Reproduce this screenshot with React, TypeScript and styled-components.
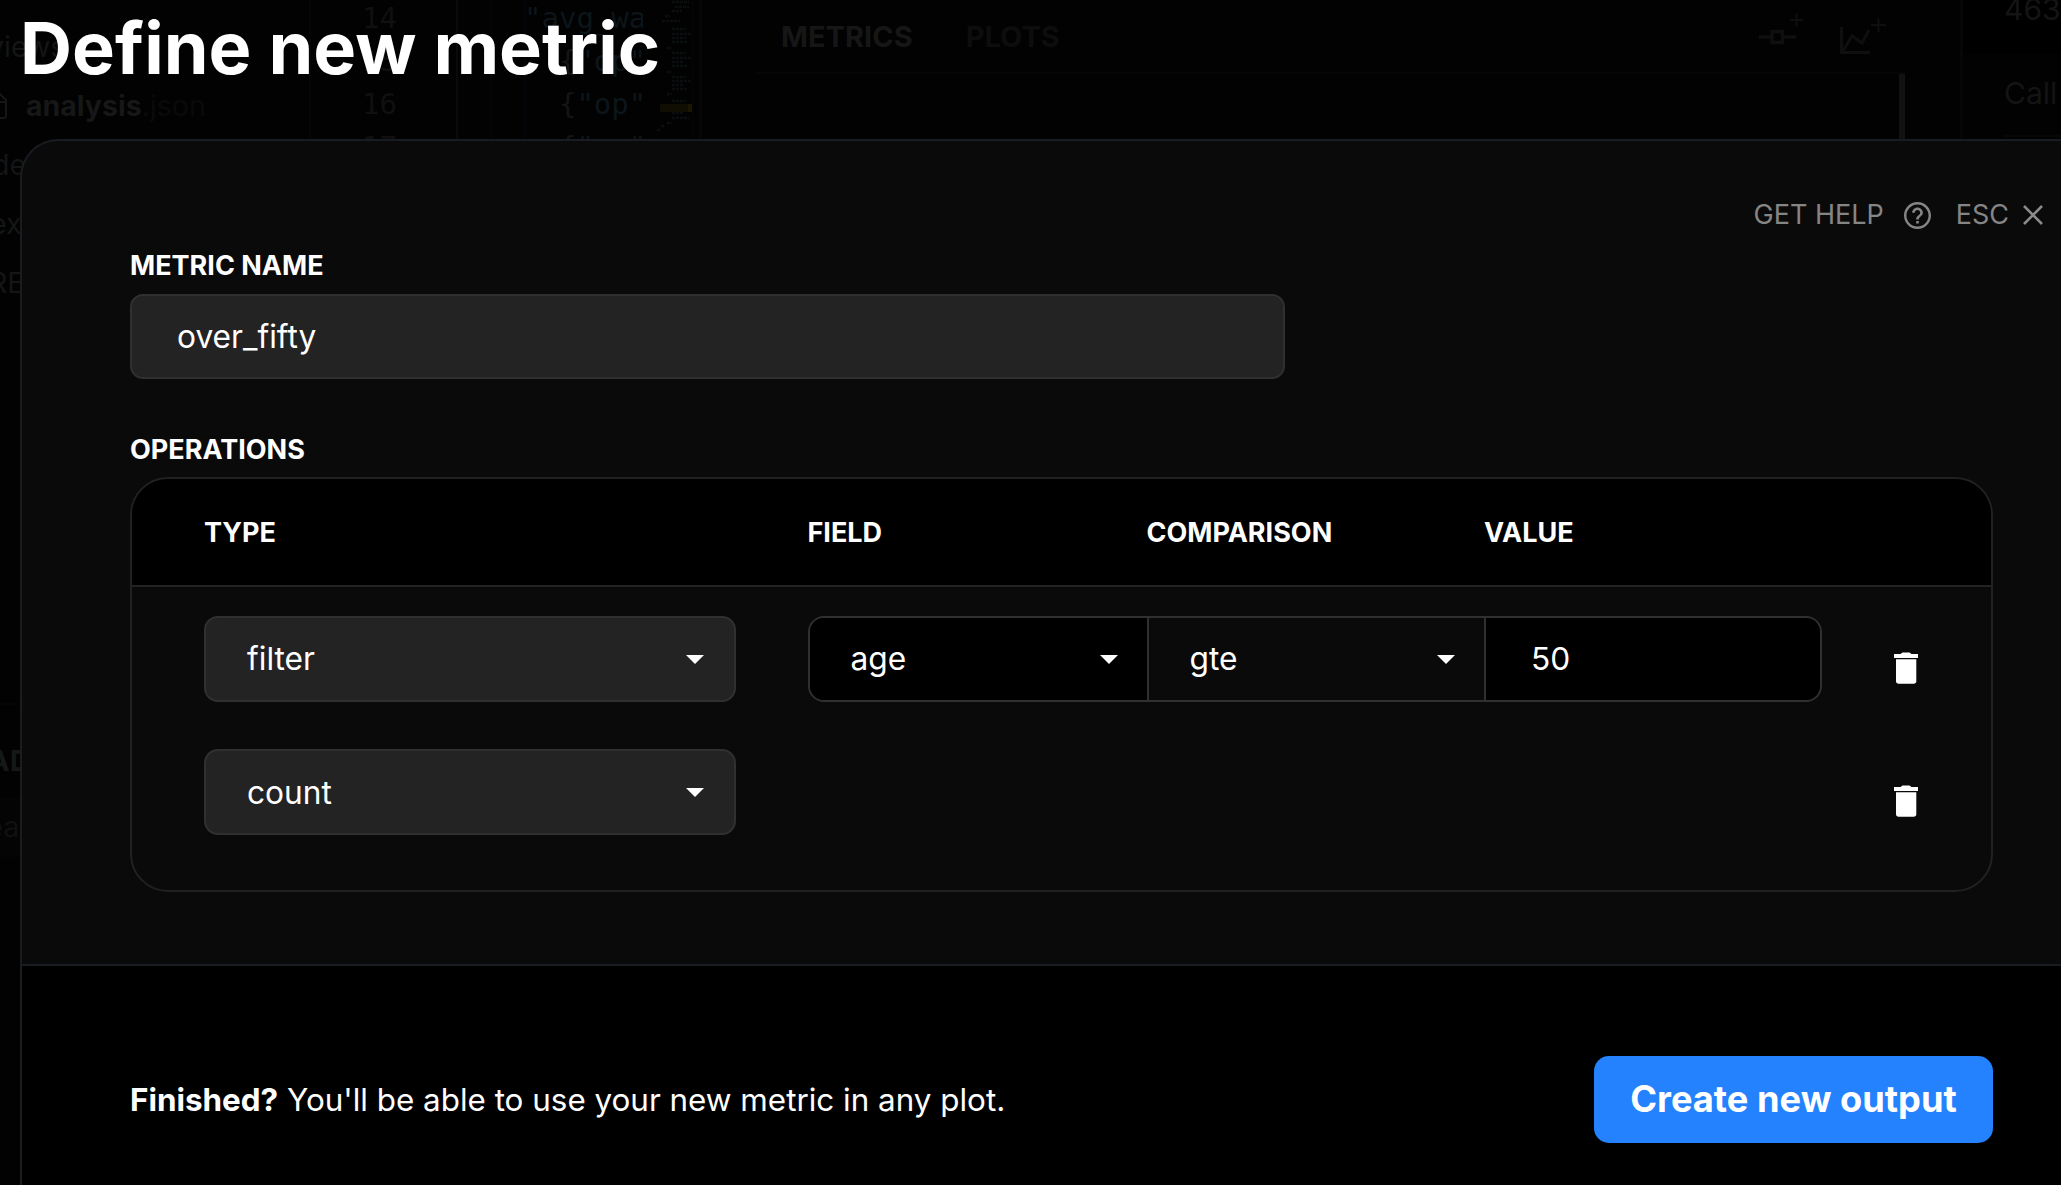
import React from "react";
import styled, { createGlobalStyle } from "styled-components";

const GlobalStyle = createGlobalStyle`
  * { box-sizing: border-box; }
  body {
    margin: 0;
    background: #000;
    color: #fff;
    font-family: Inter, "Liberation Sans", sans-serif;
    overflow: hidden;
  }
`;

const Screen = styled.div`
  position: relative;
  width: 2061px;
  height: 1185px;
  overflow: hidden;
`;

/* ---------- dimmed workspace behind the dialog ---------- */

const Workspace = styled.div`
  display: flex;
  height: 100%;
  background: #020202;
`;

const Sidebar = styled.div`
  width: 311px;
  flex: none;
  border-right: 2px solid #060606;
  padding-top: 17px;
`;

const FileRow = styled.div<{ $shift?: number }>`
  display: flex;
  align-items: center;
  height: 59px;
  margin-left: ${(p) => -(p.$shift ?? 0)}px;
  font-size: 28.5px;
  line-height: 59px;
  color: #141515;
  white-space: nowrap;

  svg { margin-right: 18px; }
  b { font-weight: 700; color: #161717; }
  span { color: #0a0a0a; }
`;

const SectionTitle = styled.div`
  margin-top: 391px;
  border-top: 2px solid #050505;
  height: 95px;
  padding-top: 37px;
  font-size: 29px;
  line-height: 38px;
  font-weight: 700;
  text-indent: -12px;
  color: #161717;
`;

const SearchRow = styled.div`
  height: 59px;
  line-height: 57px;
  font-size: 29px;
  text-indent: -14px;
  background: #040404;
  color: #101010;
`;

const Mono = styled.div`
  font-family: "DejaVu Sans Mono", "Liberation Mono", monospace;
  font-size: 29px;
  line-height: 43px;
  white-space: pre;
  overflow: hidden;
`;

const Gutter = styled(Mono)`
  width: 147px;
  flex: none;
  border-right: 2px solid #0a0a0a;
  padding-left: 51px;
  margin-top: -3px;
  color: #101010;
`;

const Code = styled(Mono)`
  width: 185px;
  flex: none;
  margin-top: -3px;
  color: #0c151a;
  display: flex;

  i { font-style: normal; color: #141414; }
`;

const IndentGuide = styled.div<{ $w: number }>`
  width: ${(p) => p.$w}px;
  flex: none;
  border-right: 2px solid #04040a;
`;

const CodeText = styled.div`
  margin-left: -2px;
`;

const MiniMap = styled.svg`
  flex: none;
`;

const Results = styled.div`
  flex: 1;
  padding-left: 54px;
  border-left: 3px solid #060606;
`;

const TabBar = styled.div`
  display: flex;
  align-items: center;
  width: 1149px;
  height: 74px;
  padding: 0 19px 0 25px;
  border-bottom: 2px solid #060606;
`;

const Tab = styled.div<{ $active?: boolean }>`
  margin-right: 53px;
  font-size: 29px;
  font-weight: 700;
  color: ${(p) => (p.$active ? "#161616" : "#0d0d0d")};
`;

const TabIcons = styled.div`
  display: flex;
  gap: 37px;
  align-items: flex-start;
  margin-left: auto;

  svg:first-child { margin-top: -5px; }
`;

const ScrollArea = styled.div`
  width: 1149px;
  height: 300px;
  border-right: 6px solid #121212;
`;

const Aside = styled.div`
  width: 101px;
  flex: none;
  border-left: 3px solid #060606;
  font-size: 30px;
  color: #141414;
`;

const AsideCount = styled.div`
  height: 54px;
  padding-left: 41px;
  line-height: 18px;
  background: #000;
`;

const AsideItem = styled.div`
  height: 83px;
  margin-left: 41px;
  line-height: 78px;
  border-bottom: 2px solid #070707;
`;

/* ---------- dialog ---------- */

const Overlay = styled.div`
  position: absolute;
  inset: 0;
  display: flex;
  flex-direction: column;
  padding-left: 20px;
`;

const Title = styled.h1`
  flex: none;
  height: 139px;
  margin: 0;
  padding-top: 4px;
  font-size: 72px;
  line-height: 88px;
  font-weight: 700;
`;

const Dialog = styled.section`
  flex: 1;
  display: flex;
  flex-direction: column;
  background: #0a0a0a;
  border: 2px solid #191c21;
  border-width: 2px 0 0 2px;
  border-top-left-radius: 38px;
  overflow: hidden;
`;

const Toolbar = styled.div`
  display: flex;
  justify-content: flex-end;
  align-items: center;
  height: 34px;
  margin-top: 57px;
  padding-right: 18px;
  font-size: 27px;
  line-height: 34px;
  color: #858585;

  svg { flex: none; }
`;

const HelpText = styled.span`
  margin-right: 20px;
`;

const EscText = styled.span`
  margin: 0 14px 0 25px;
`;

const Form = styled.div`
  padding: 17px 68px 72px 108px;
`;

const Label = styled.div`
  margin-bottom: 11px;
  font-size: 27px;
  line-height: 34px;
  font-weight: 700;
`;

const NameInput = styled.div`
  display: flex;
  align-items: center;
  width: 1155px;
  height: 85px;
  margin-bottom: 54px;
  padding-left: 45px;
  border: 2px solid #303030;
  border-radius: 13px;
  background: #232323;
  font-size: 31.7px;
`;

const Table = styled.div`
  width: 1863px;
  height: 415px;
  margin-top: -1px;
  border: 2px solid #212121;
  border-radius: 38px;
  overflow: hidden;
`;

const HeaderRow = styled.div`
  display: grid;
  grid-template-columns: 603.5px 339px 337.5px auto;
  align-items: center;
  height: 108px;
  padding: 1px 0 0 72px;
  border-bottom: 2px solid #232323;
  background: #000;
  font-size: 27px;
  font-weight: 700;
`;

const Rows = styled.div`
  display: flex;
  flex-direction: column;
  gap: 47px;
  padding: 29px 0 0 72px;
`;

const Row = styled.div`
  display: grid;
  grid-template-columns: 532px 1014px 24px;
  column-gap: 72px;
  height: 86px;
`;

const OptionText = styled.span<{ $raised?: boolean }>`
  padding-bottom: ${(p) => (p.$raised ? 2 : 0)}px;
`;

const Select = styled.div`
  display: flex;
  align-items: center;
  justify-content: space-between;
  padding: 0 30px 0 41px;
  border: 2px solid #303030;
  border-radius: 14px;
  background: #232323;
  font-size: 31.7px;
`;

const Group = styled.div`
  display: grid;
  grid-template-columns: 339px 337px auto;
  border: 2px solid #303030;
  border-radius: 16px;
  overflow: hidden;
  font-size: 31.7px;
`;

const Cell = styled.div<{ $tone: string; $last?: boolean }>`
  display: flex;
  align-items: center;
  justify-content: space-between;
  padding: 0 29px 0 ${(p) => (p.$last ? 45 : 40.5)}px;
  border-right: ${(p) => (p.$last ? "0" : "2px solid #303030")};
  background: ${(p) => p.$tone};
`;

const DeleteButton = styled.div`
  grid-column: 3;
  padding-top: 36px;
  line-height: 0;
`;

const Footer = styled.footer`
  flex: 1;
  display: flex;
  justify-content: space-between;
  align-items: flex-start;
  padding: 90px 68px 0 108px;
  border-top: 2px solid #191c21;
  background: #000;
`;

const FooterText = styled.p`
  margin: 0;
  font-size: 31.4px;
  line-height: 89px;
`;

const PrimaryButton = styled.div`
  width: 399px;
  height: 87px;
  border-radius: 15px;
  background: #2482ff;
  font-size: 36.25px;
  line-height: 87px;
  font-weight: 700;
  text-align: center;
`;

const Caret = () => (
  <svg width="18" height="9" viewBox="0 0 18 9">
    <path d="M0 0H18L9 9Z" fill="#fff" />
  </svg>
);

const Trash = () => (
  <svg width="24" height="32" viewBox="0 0 24 32">
    <path d="M0 2H6.5L8.5 0.5H15.5L17.5 2H24V6H0Z" fill="#fff" />
    <path d="M2 7.3H22.3V29Q22.3 31.7 19.6 31.7H4.7Q2 31.7 2 29Z" fill="#fff" />
  </svg>
);

const HelpIcon = () => (
  <svg width="27" height="27" viewBox="2 2 20 20" fill="#858585">
    <path d="M11 18h2v-2h-2v2zm1-16C6.48 2 2 6.48 2 12s4.48 10 10 10 10-4.48 10-10S17.52 2 12 2zm0 18.2c-4.520 0-8.2-3.680-8.2-8.2s3.680-8.2 8.2-8.2 8.2 3.680 8.2 8.2-3.680 8.2-8.2 8.2zm0-14.2c-2.210 0-4 1.790-4 4h2c0-1.100.9-2 2-2s2 .9 2 2c0 2-3 1.750-3 5h2c0-2.250 3-2.500 3-5 0-2.210-1.790-4-4-4z" />
  </svg>
);

const CloseIcon = () => (
  <svg width="20" height="20" viewBox="0 0 20 20" stroke="#8a8a8a" strokeWidth="2.6">
    <path d="M1 1L19 19M19 1L1 19" />
  </svg>
);

const FileEdge = () => (
  <svg width="8" height="28" viewBox="0 0 8 28" fill="none" stroke="#151616" strokeWidth="2">
    <path d="M-1 1L6 8V24Q6 26 4 26H-1M6 10H-1" />
  </svg>
);

const NodeAddIcon = () => (
  <svg width="44" height="34" viewBox="0 0 44 34" fill="none" stroke="#0f0f0f">
    <path d="M0 24H12M25 24H37" strokeWidth="3.5" />
    <rect x="13" y="18.500" width="10.500" height="11" strokeWidth="3.500" />
    <path d="M31 7H44M37.500 .5V13" strokeWidth="2" />
  </svg>
);

const ChartAddIcon = () => (
  <svg width="46" height="37" viewBox="0 0 46 37" fill="none" stroke="#0f0f0f">
    <path d="M1.500 9V34.500H30" strokeWidth="3" />
    <path d="M3 33L12 18L22 25L29 12" strokeWidth="3" />
    <path d="M31 7H46M38.500 0V14" strokeWidth="2" />
  </svg>
);

const miniLines = [
  [15, 2, 17], [18, 7, 14], [15, 11, 10], [8, 16, 5], [5, 21, 18], [15, 29, 14],
  [15, 34, 19], [15, 38, 14], [15, 42, 16], [10, 48, 5], [15, 53, 14], [15, 58, 19],
  [15, 62, 12], [15, 66, 16], [10, 72, 5], [15, 77, 14], [15, 81, 19], [15, 85, 12],
  [15, 89, 16], [10, 94, 5], [15, 101, 14], [15, 113, 12], [15, 118, 17], [10, 123, 5],
  [4, 126, 3], [0, 130, 3],
];

export default function App() {
  return (
    <Screen>
      <GlobalStyle />
      <Workspace>
        <Sidebar>
          <FileRow $shift={12}>views</FileRow>
          <FileRow>
            <FileEdge />
            <b>analysis</b>
            <span>.json</span>
          </FileRow>
          <FileRow $shift={8}>de</FileRow>
          <FileRow $shift={10}>ex</FileRow>
          <FileRow $shift={11}>RE</FileRow>
          <SectionTitle>AD</SectionTitle>
          <SearchRow>ear</SearchRow>
        </Sidebar>
        <Gutter>{"14\n15\n16\n17"}</Gutter>
        <Code>
          <IndentGuide $w={34} />
          <IndentGuide $w={34} />
          <CodeText>
            {'"avg_wa:\n'}
            <i>{"  {"}</i>{'"op"\n'}
            <i>{"  {"}</i>{'"op"\n'}
            <i>{"  {"}</i>{'"op"'}
          </CodeText>
        </Code>
        <MiniMap width="56" height="139" viewBox="0 0 56 139">
          <path d="M17 104H49V112H17Z" fill="#100d02" />
          <path d="M45 104H49V112H45Z" fill="#1b1503" />
          {miniLines.map(([x, y, w], i) => (
            <path
              key={i}
              d={`M${x + 14} ${y}h${w}`}
              stroke="#0b0d0f"
              strokeWidth="2.500"
              strokeDasharray="3 1"
            />
          ))}
          <path d="M50 0V139" stroke="#060606" strokeWidth="1" />
        </MiniMap>
        <Results>
          <TabBar>
            <Tab $active>METRICS</Tab>
            <Tab>PLOTS</Tab>
            <TabIcons>
              <NodeAddIcon />
              <ChartAddIcon />
            </TabIcons>
          </TabBar>
          <ScrollArea />
        </Results>
        <Aside>
          <AsideCount>463</AsideCount>
          <AsideItem>Call</AsideItem>
        </Aside>
      </Workspace>

      <Overlay>
        <Title>Define new metric</Title>
        <Dialog>
          <Toolbar>
            <HelpText>GET HELP</HelpText>
            <HelpIcon />
            <EscText>ESC</EscText>
            <CloseIcon />
          </Toolbar>
          <Form>
            <Label>METRIC NAME</Label>
            <NameInput>over_fifty</NameInput>
            <Label>OPERATIONS</Label>
            <Table>
              <HeaderRow>
                <span>TYPE</span>
                <span>FIELD</span>
                <span>COMPARISON</span>
                <span>VALUE</span>
              </HeaderRow>
              <Rows>
                <Row>
                  <Select>
                    <OptionText $raised>filter</OptionText>
                    <Caret />
                  </Select>
                  <Group>
                    <Cell $tone="#000">
                      <OptionText $raised>age</OptionText>
                      <Caret />
                    </Cell>
                    <Cell $tone="#0a0a0a">
                      <OptionText $raised>gte</OptionText>
                      <Caret />
                    </Cell>
                    <Cell $tone="#000" $last>
                      <OptionText $raised>50</OptionText>
                    </Cell>
                  </Group>
                  <DeleteButton><Trash /></DeleteButton>
                </Row>
                <Row>
                  <Select>
                    <OptionText>count</OptionText>
                    <Caret />
                  </Select>
                  <DeleteButton><Trash /></DeleteButton>
                </Row>
              </Rows>
            </Table>
          </Form>
          <Footer>
            <FooterText>
              <b>Finished?</b> You'll be able to use your new metric in any plot.
            </FooterText>
            <PrimaryButton>Create new output</PrimaryButton>
          </Footer>
        </Dialog>
      </Overlay>
    </Screen>
  );
}
